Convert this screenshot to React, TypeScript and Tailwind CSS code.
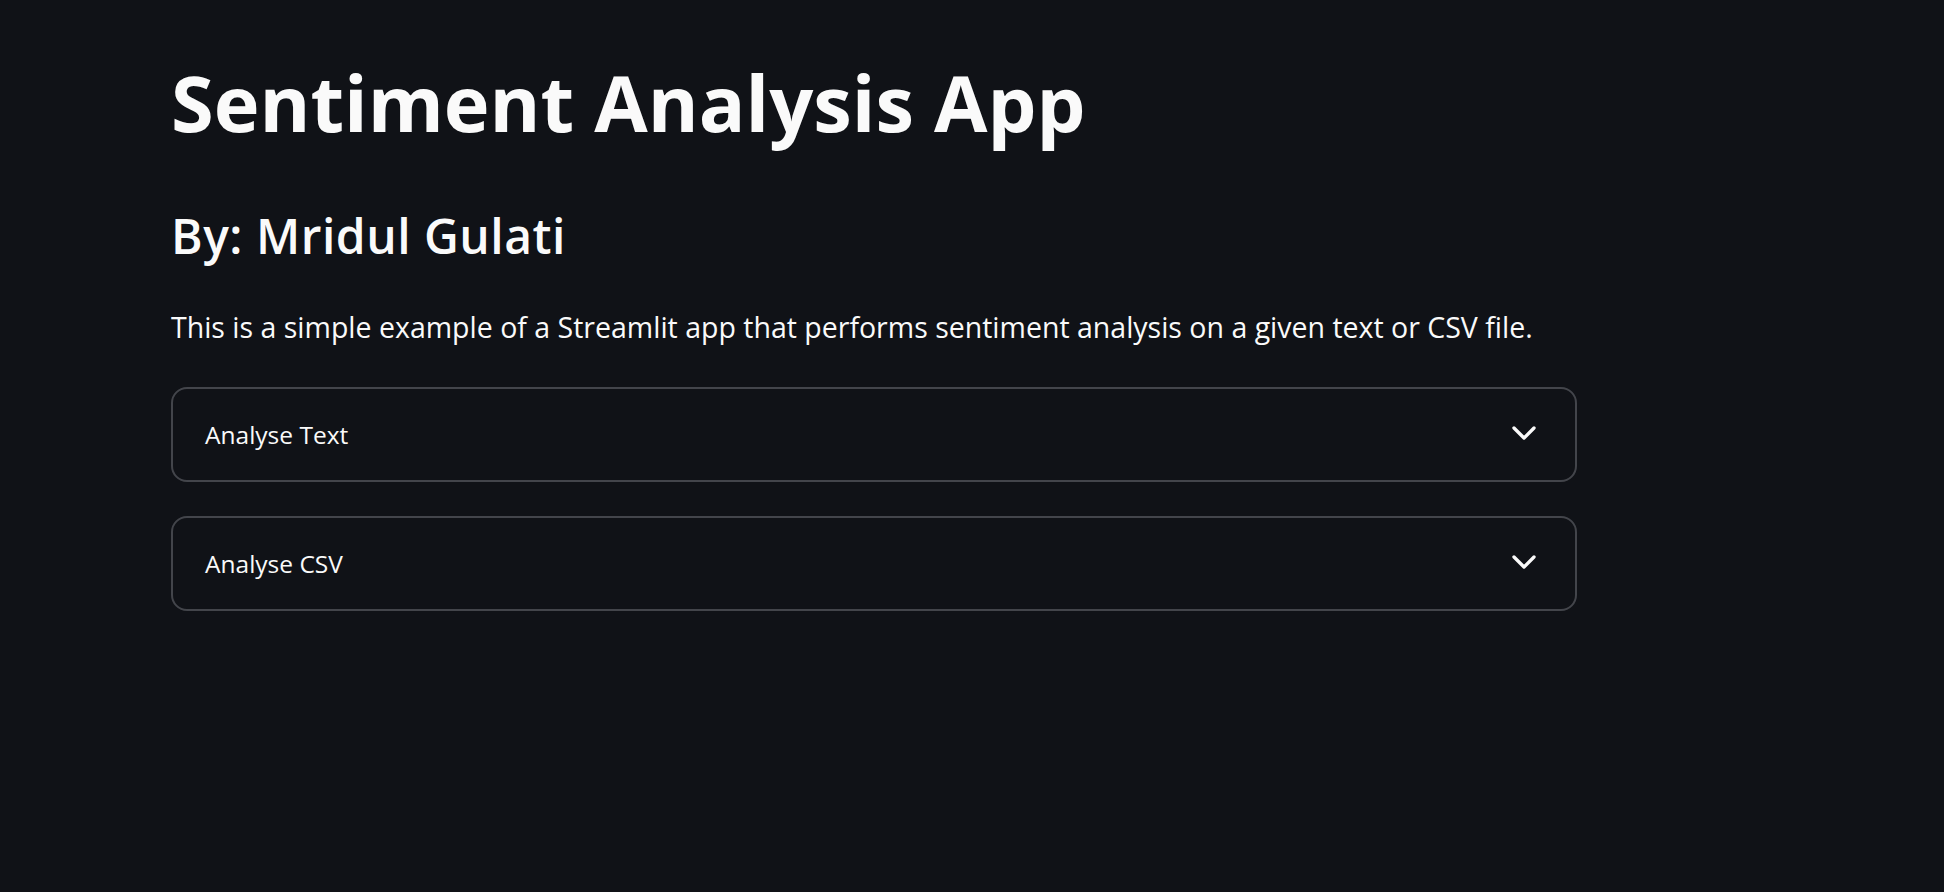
import { ChevronDown } from "lucide-react";

const sections = ["Analyse Text", "Analyse CSV"];

function Expander({ label }: { label: string }) {
  return (
    <div className="flex h-[95px] w-full items-center justify-between rounded-[16px] border-2 border-[#43454b] pl-[32px] pr-[31px]">
      <span className="mt-[2px] text-[24.5px] leading-none text-[#fafafa]">{label}</span>
      <ChevronDown className="mb-[3px] h-[40px] w-[40px] text-[#fafafa]" strokeWidth={2} />
    </div>
  );
}

export default function App() {
  return (
    <main className="min-h-[892px] w-full bg-[#101217] font-['Open_Sans',sans-serif] text-[#fafafa] [font-variant-ligatures:none]">
      <div className="ml-[171px] w-[1406px] pt-[64px]">
        <h1 className="text-[77.5px] font-bold leading-none">Sentiment Analysis App</h1>
        <h3 className="mt-[70px] text-[48px] font-semibold leading-none tracking-[0.5px]">By: Mridul Gulati</h3>
        <p className="mt-[53px] text-[28.5px] leading-none">
          This is a simple example of a Streamlit app that performs sentiment analysis on a given text or CSV file.
        </p>
        <div className="mt-[46px] flex flex-col gap-[34px]">
          {sections.map((s) => (
            <Expander key={s} label={s} />
          ))}
        </div>
      </div>
    </main>
  );
}
